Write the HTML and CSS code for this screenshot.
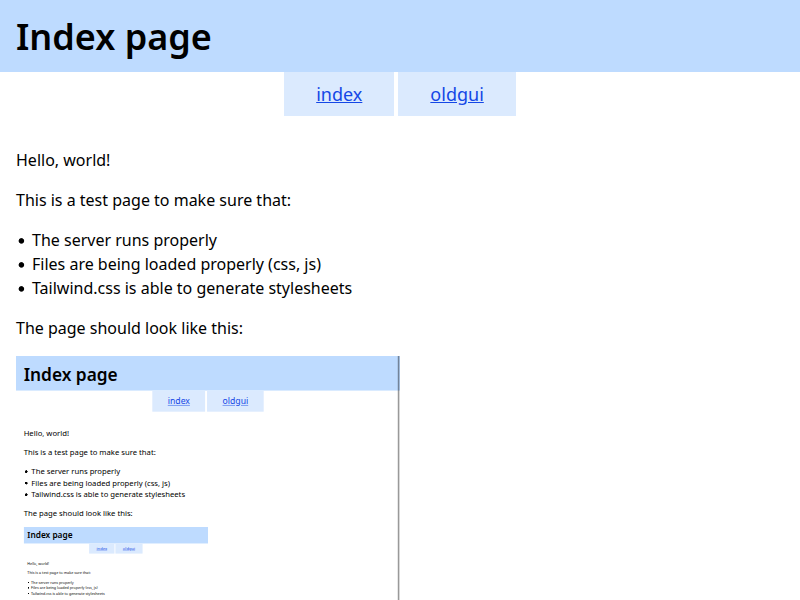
FILE: index.html
```html
<!DOCTYPE html>
<html lang="en">
<head>
<meta charset="utf-8">
<title>Index page</title>
<link rel="stylesheet" href="styles.css">
</head>
<body>
<div class="page">
  <header class="header"><h1>Index page</h1></header>
  <nav class="nav"><a href="#">index</a><a href="#">oldgui</a></nav>
  <main class="content">
    <p>Hello, world!</p>
    <p>This is a test page to make sure that:</p>
    <ul>
      <li>The server runs properly</li>
      <li>Files are being loaded properly (css, js)</li>
      <li>Tailwind.css is able to generate stylesheets</li>
    </ul>
    <p>The page should look like this:</p>
    <div class="preview">
      <div class="page framed">
        <header class="header"><h1>Index page</h1></header>
        <nav class="nav"><a href="#">index</a><a href="#">oldgui</a></nav>
        <main class="content">
          <p>Hello, world!</p>
          <p>This is a test page to make sure that:</p>
          <ul>
            <li>The server runs properly</li>
            <li>Files are being loaded properly (css, js)</li>
            <li>Tailwind.css is able to generate stylesheets</li>
          </ul>
          <p>The page should look like this:</p>
          <div class="preview">
            <div class="page">
              <header class="header"><h1>Index page</h1></header>
              <nav class="nav"><a href="#">index</a><a href="#">oldgui</a></nav>
              <main class="content">
                <p>Hello, world!</p>
                <p>This is a test page to make sure that:</p>
                <ul>
                  <li>The server runs properly</li>
                  <li>Files are being loaded properly (css, js)</li>
                  <li>Tailwind.css is able to generate stylesheets</li>
                </ul>
              </main>
            </div>
          </div>
        </main>
      </div>
    </div>
  </main>
</div>
</body>
</html>
```
FILE: styles.css
```css
* { box-sizing: border-box; margin: 0; padding: 0; }
body {
  height: 600px;
  overflow: hidden;
  background: #fff;
  color: #000;
  font: 16px/24px "Noto Sans", sans-serif;
}
.page { width: 800px; height: 600px; overflow: hidden; background: #fff; }
.header { height: 72px; padding: 17px 16px 15px; background: #bedbff; }
.header h1 { font-size: 36px; line-height: 40px; font-weight: 600; }
.nav { display: flex; justify-content: center; gap: 4px; height: 44px; }
.nav a {
  padding: 8px 32px;
  background: #dbeafe;
  color: #1447e6;
  font-size: 18px;
  line-height: 28px;
  text-decoration: underline;
}
.content { display: flex; flex-direction: column; gap: 16px; padding: 32px 16px 0; }
.content ul { list-style: none; }
.content li { display: flex; align-items: center; }
.content li::before {
  content: "";
  width: 16px;
  height: 24px;
  background: radial-gradient(circle at 5.4px 12.9px, #000 2.3px, transparent 3.2px);
}
.preview { width: 384px; height: 288px; }
.preview > .page { transform: scale(0.48); transform-origin: 0 0; }
.framed > .header { padding-top: 18.5px; }
.framed { position: relative; }
.framed::after {
  content: "";
  position: absolute;
  top: 0;
  right: 0;
  width: 6px;
  height: 100%;
  background: linear-gradient(to right, rgba(0,0,0,.1) 0 2px, rgba(0,0,0,.4) 2px 4px, rgba(0,0,0,.15) 4px);
}
```
